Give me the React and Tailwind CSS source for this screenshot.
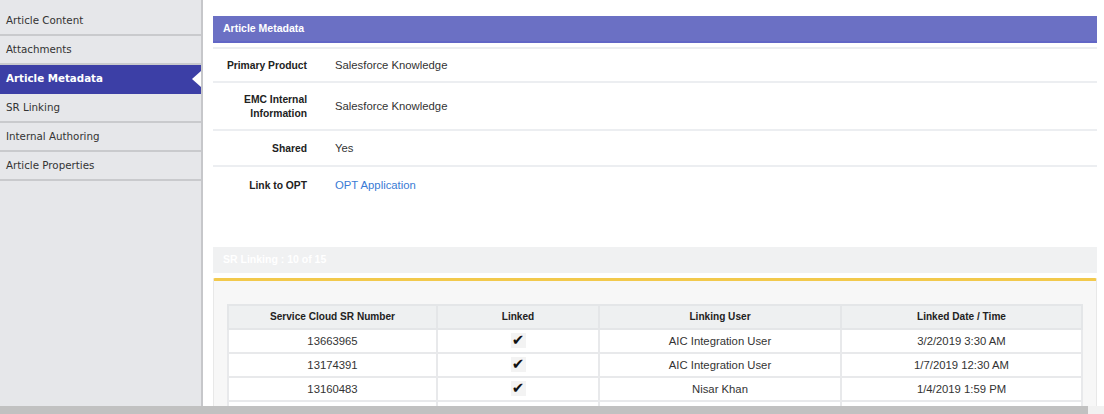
import React from 'react'

const navItems = [
    'Article Content',
    'Attachments',
    'Article Metadata',
    'SR Linking',
    'Internal Authoring',
    'Article Properties',
]

const metaRows = [
    { label: ['Primary Product'], value: 'Salesforce Knowledge', h: 'h-[36px]' },
    { label: ['EMC Internal', 'Information'], value: 'Salesforce Knowledge', h: 'h-[48px]' },
    { label: ['Shared'], value: 'Yes', h: 'h-[36px]' },
    { label: ['Link to OPT'], value: 'OPT Application', link: true, h: 'h-[36px]' },
]

const srRows = [
    ['13663965', 'AIC Integration User', '3/2/2019 3:30 AM'],
    ['13174391', 'AIC Integration User', '1/7/2019 12:30 AM'],
    ['13160483', 'Nisar Khan', '1/4/2019 1:59 PM'],
    ['', '', ''],
]

function Sidebar() {
    return (
        <div className="w-[203px] shrink-0 bg-[#e6e7ea] border-r-2 border-[#c6c7ca] pt-[7px] font-['DejaVu_Sans',sans-serif] text-[10.3px]">
            {navItems.map((item) => {
                const active = item === 'Article Metadata'
                return (
                    <div
                        key={item}
                        className={
                            active
                                ? 'relative h-[29px] flex items-center pl-[6px] bg-[#3c3fa6] text-white font-bold border-b-2 border-[#3c3fa6]'
                                : 'relative h-[29px] flex items-center pl-[6px] text-[#333] border-b-2 border-[#c9cacd]'
                        }
                    >
                        {item}
                        {active && (
                            <span className="absolute right-0 top-1/2 -translate-y-1/2 w-0 h-0 border-y-[8px] border-y-transparent border-r-[9px] border-r-white" />
                        )}
                    </div>
                )
            })}
        </div>
    )
}

function MetadataSection() {
    return (
        <div>
            <div className="h-[27px] bg-[#6b70c4] border-b-2 border-[#6166c6] flex items-center pl-[10px] text-white font-bold text-[10.5px]">
                Article Metadata
            </div>
            <div className="mt-[4px]">
                {metaRows.map((row, i) => (
                    <div
                        key={i}
                        className={`${row.h} flex items-center ${i < metaRows.length - 1 ? 'border-b-2' : ''} ${i === 0 ? 'border-t-2' : ''} border-[#eceef1]`}
                    >
                        <div className="w-[94px] text-right font-bold text-[10.3px] text-[#222] leading-[14px] pt-[1px]">
                            {row.label.map((l) => (
                                <div key={l}>{l}</div>
                            ))}
                        </div>
                        <div className={`ml-[28px] text-[11.3px] ${row.link ? 'text-[#3a7bd5]' : 'text-[#333]'}`}>
                            {row.value}
                        </div>
                    </div>
                ))}
            </div>
        </div>
    )
}

function Check() {
    return (
        <span className="inline-flex items-center justify-center w-[15px] h-[15px] bg-[#f3f3f3] font-['DejaVu_Sans',sans-serif] text-[15px] leading-none text-[#111]">
            ✔
        </span>
    )
}

function SrSection() {
    return (
        <div className="mt-[44px]">
            <div className="h-[26px] bg-[#f0f1f2] flex items-center pl-[10px] text-white font-bold text-[10.5px]">
                SR Linking : 10 of 15
            </div>
            <div className="mt-[5px] border-t-[3px] border-[#f2c94c] rounded-t-[2px] bg-[#f7f7f7] border-x border-x-[#e8e8e8] px-[13px] pt-[23px] h-[140px]">
                <table className="w-full border-collapse text-[11.3px] text-[#333]">
                    <colgroup>
                        <col className="w-[209px]" />
                        <col className="w-[162px]" />
                        <col className="w-[242px]" />
                        <col />
                    </colgroup>
                    <thead>
                        <tr className="h-[24px] bg-[#eef0f1]">
                            {['Service Cloud SR Number', 'Linked', 'Linking User', 'Linked Date / Time'].map((h) => (
                                <th key={h} className="border-2 border-[#e4e6e8] font-bold text-[10.1px] text-[#222]">
                                    {h}
                                </th>
                            ))}
                        </tr>
                    </thead>
                    <tbody>
                        {srRows.map((r, i) => (
                            <tr key={i} className="h-[24px] bg-white">
                                <td className="border-2 border-[#e8e9eb] text-center">{r[0]}</td>
                                <td className="border-2 border-[#e8e9eb] text-center">{r[0] && <Check />}</td>
                                <td className="border-2 border-[#e8e9eb] text-center">{r[1]}</td>
                                <td className="border-2 border-[#e8e9eb] text-center">{r[2]}</td>
                            </tr>
                        ))}
                    </tbody>
                </table>
            </div>
        </div>
    )
}

export default function App() {
    return (
        <div className="h-[414px] w-full overflow-hidden flex flex-col bg-white font-['Liberation_Sans',Arial,sans-serif]">
            <div className="flex-1 flex min-h-0">
                <Sidebar />
                <main className="flex-1 min-w-0 pl-[10px] pr-[7px] pt-[16px] overflow-hidden">
                    <MetadataSection />
                    <SrSection />
                </main>
            </div>
            {/* horizontal scrollbar */}
            <div className="h-[8px] flex shrink-0">
                <div className="flex-1 bg-[#c1c1c1]" />
                <div className="w-[16px] bg-[#f1f1f1]" />
            </div>
        </div>
    )
}
